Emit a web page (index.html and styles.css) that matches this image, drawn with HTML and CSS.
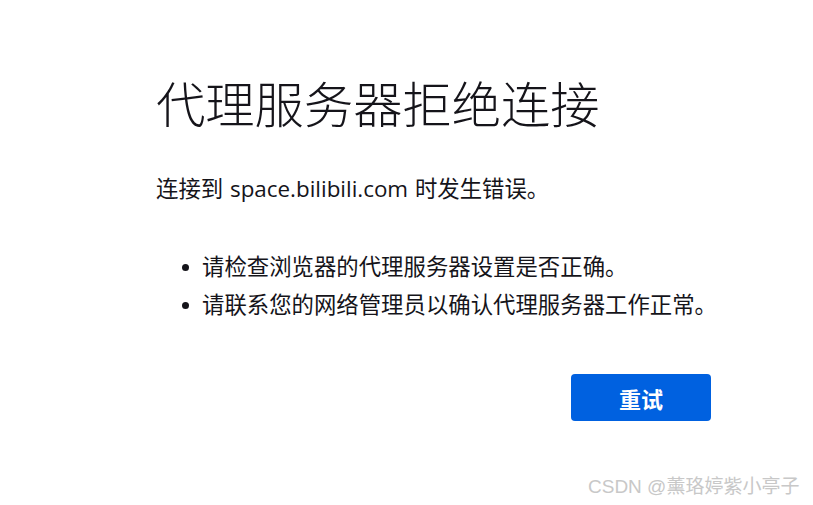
FILE: index.html
```html
<!DOCTYPE html>
<html lang="zh-CN">
<head>
<meta charset="utf-8">
<title>代理服务器拒绝连接</title>
<link rel="stylesheet" href="styles.css">
</head>
<body>
<main class="page">
  <h1 class="title">代理服务器拒绝连接</h1>
  <p class="desc">连接到 space.bilibili.com 时发生错误。</p>
  <ul class="tips">
    <li class="tip">请检查浏览器的代理服务器设置是否正确。</li>
    <li class="tip">请联系您的网络管理员以确认代理服务器工作正常。</li>
  </ul>
  <div class="actions">
    <button class="retry" type="button">重试</button>
  </div>
</main>
<div class="watermark">CSDN @薰珞婷紫小亭子</div>
</body>
</html>
```

FILE: styles.css
```css
html, body {
  margin: 0;
  padding: 0;
  background: #ffffff;
}

body {
  font-family: "Open Sans", "Noto Sans CJK SC", sans-serif;
  color: #15141a;
  width: 813px;
  height: 505px;
  position: relative;
  overflow: hidden;
}

.page {
  width: 555px;
  padding: 77px 0 0 156px;
}

.title {
  margin: 0;
  font-family: "Noto Sans CJK SC", sans-serif;
  font-size: 49.3px;
  line-height: 49px;
  font-weight: 300;
  white-space: nowrap;
}

.desc {
  margin: 48px 0 0 0;
  font-size: 22.4px;
  line-height: 30px;
  word-spacing: 1px;
  white-space: nowrap;
}

.tips {
  list-style: none;
  margin: 44px 0 0 26px;
  padding: 0;
}

.tip {
  font-size: 22.4px;
  line-height: 38px;
  white-space: nowrap;
}

.tip::before {
  content: "";
  display: inline-block;
  width: 7px;
  height: 7px;
  border-radius: 50%;
  background: #15141a;
  margin-right: 13px;
  vertical-align: middle;
  position: relative;
  top: -2px;
}

.actions {
  display: flex;
  justify-content: flex-end;
  margin-top: 50px;
}

.retry {
  width: 140px;
  height: 47px;
  border: none;
  border-radius: 4px;
  background: #0061e0;
  color: #ffffff;
  font-family: "Noto Sans CJK SC", sans-serif;
  font-weight: 700;
  font-size: 22px;
  padding: 0;
}

.watermark {
  position: absolute;
  left: 588px;
  top: 474px;
  font-family: "Liberation Sans", "Noto Sans CJK SC", sans-serif;
  font-size: 19px;
  line-height: 26px;
  color: #c8c8c8;
  white-space: nowrap;
}
```
